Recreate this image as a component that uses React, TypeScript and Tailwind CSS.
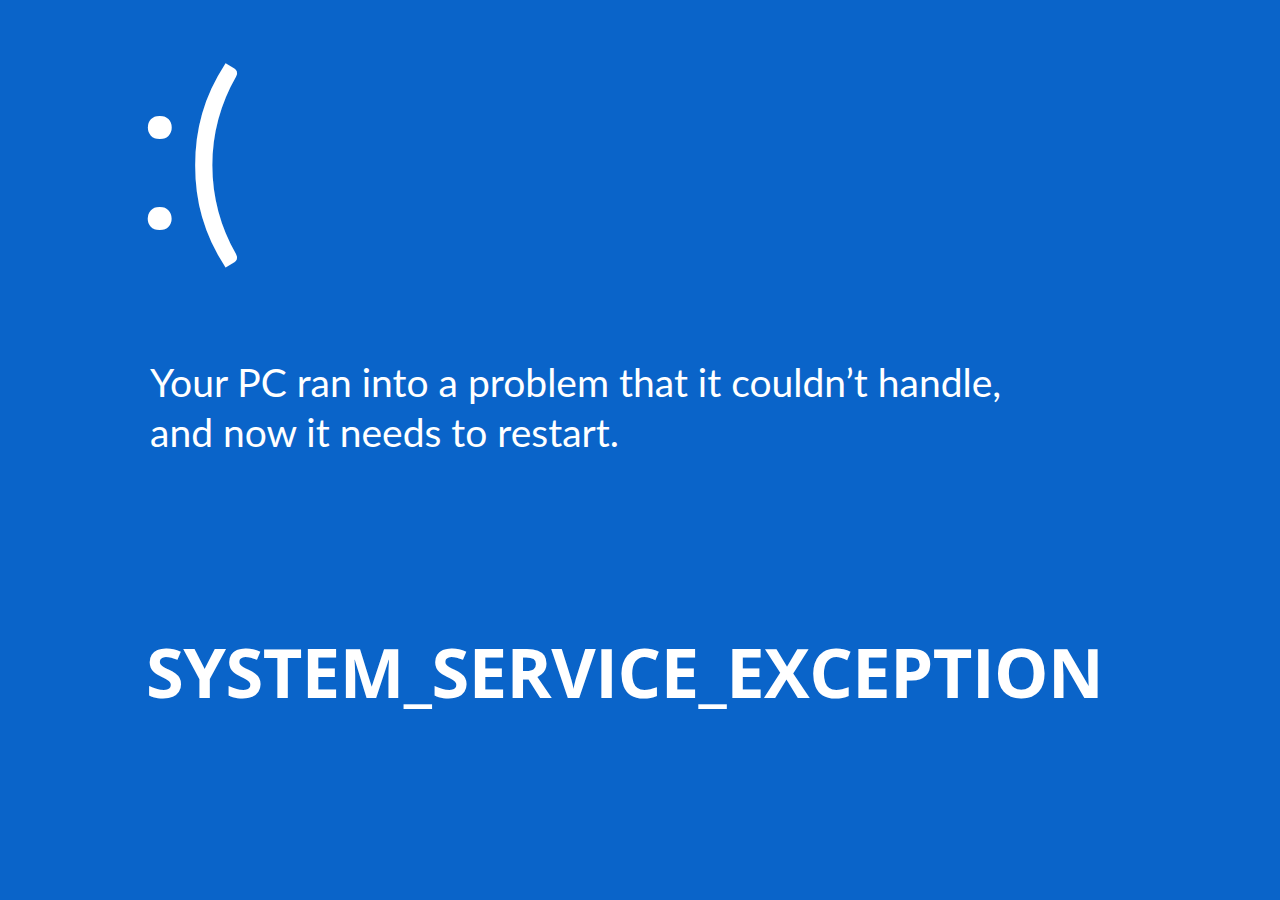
export default function App() {
  return (
    <div className="w-[1280px] h-[900px] bg-[#0a64c9] text-white overflow-hidden font-['Open_Sans','Noto_Sans',sans-serif]">
      {/* sad face */}
      <div className="flex items-start pl-[134px] whitespace-nowrap">
        <span className="mt-[51px] text-[212px] font-normal leading-none font-[Roboto,'Open_Sans',sans-serif]">:</span>
        <span className="mt-[39px] text-[221px] font-normal leading-none font-[Lato,'Open_Sans',sans-serif]">(</span>
      </div>

      <div className="pl-[150px] pt-[94px] text-[39px] leading-[50px] font-[Lato,'Open_Sans',sans-serif]">
        <p>Your PC ran into a problem that it couldn’t handle,</p>
        <p>and now it needs to restart.</p>
      </div>

      <div className="pl-[146px] pt-[181px]">
        <h1 className="text-[68.5px] font-bold leading-none tracking-[-0.5px]">SYSTEM_SERVICE_EXCEPTION</h1>
      </div>
    </div>
  );
}
